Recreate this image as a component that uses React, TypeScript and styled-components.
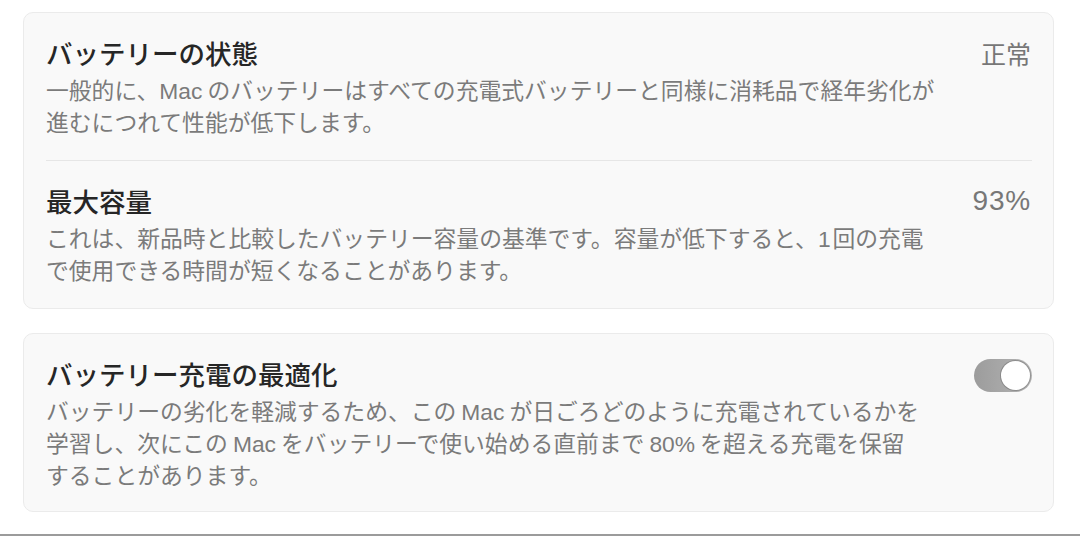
import { Fragment } from "react";
import styled, { createGlobalStyle } from "styled-components";

const GlobalStyle = createGlobalStyle`
  html, body {
    margin: 0;
    padding: 0;
    background: #ffffff;
  }
  body {
    font-family: "Noto Sans CJK JP", "Noto Sans", sans-serif;
    -webkit-font-smoothing: antialiased;
  }
`;

interface Item {
  title: string;
  lines: string[];
  value?: string;
}

const statusItems: Item[] = [
  {
    title: "バッテリーの状態",
    lines: [
      "一般的に、Macのバッテリーはすべての充電式バッテリーと同様に消耗品で経年劣化が",
      "進むにつれて性能が低下します。",
    ],
    value: "正常",
  },
  {
    title: "最大容量",
    lines: [
      "これは、新品時と比較したバッテリー容量の基準です。容量が低下すると、1回の充電",
      "で使用できる時間が短くなることがあります。",
    ],
    value: "93%",
  },
];

const optimizeItem: Item = {
  title: "バッテリー充電の最適化",
  lines: [
    "バッテリーの劣化を軽減するため、このMacが日ごろどのように充電されているかを",
    "学習し、次にこのMacをバッテリーで使い始める直前まで80%を超える充電を保留",
    "することがあります。",
  ],
};

const LATIN = /^[A-Za-z0-9%]+$/;

// wrap latin runs so they get the wider latin face and the small gap macOS puts around them
function withLatin(text: string) {
  const parts = text.split(/([A-Za-z0-9%]+)/);
  return parts.map((part, i) => {
    if (!LATIN.test(part)) return <Fragment key={i}>{part}</Fragment>;
    const prev = parts[i - 1] ?? "";
    const afterPunct = prev === "" || /[、。]$/.test(prev);
    const digits = /^[0-9]+$/.test(part);
    return (
      <Latin key={i} left={!afterPunct} right={!digits}>
        {part}
      </Latin>
    );
  });
}

function Lines({ lines }: { lines: string[] }) {
  return (
    <Description>
      {lines.map((l) => (
        <Line key={l}>{withLatin(l)}</Line>
      ))}
    </Description>
  );
}

export default function App() {
  return (
    <Page>
      <GlobalStyle />
      <Content>
        <Card>
          {statusItems.map((item, i) => (
            <Row key={item.title} divided={i > 0} bottom={22}>
              <Text>
                <Title>{item.title}</Title>
                <Lines lines={item.lines} />
              </Text>
              <Value latin={/^[0-9%]+$/.test(item.value ?? "")}>
                {item.value}
              </Value>
            </Row>
          ))}
        </Card>

        <Card>
          <Row divided={false} bottom={20}>
            <Text>
              <Title>{optimizeItem.title}</Title>
              <Lines lines={optimizeItem.lines} />
            </Text>
            <Toggle on={true} aria-label={optimizeItem.title}>
              <Knob />
            </Toggle>
          </Row>
        </Card>
      </Content>
      <BottomRule />
    </Page>
  );
}

const Page = styled.div`
  width: 1080px;
  height: 537px;
  display: flex;
  flex-direction: column;
  justify-content: space-between;
  overflow: hidden;
`;

const Content = styled.div`
  display: flex;
  flex-direction: column;
  gap: 24px;
  padding: 12px 26px 0 23px;
`;

const Card = styled.section`
  background: #f9f9f9;
  border: 1px solid #ebebeb;
  border-radius: 10px;
  padding: 0 21px 0 22px;
`;

const Row = styled.div<{ divided: boolean; bottom: number }>`
  display: flex;
  justify-content: space-between;
  align-items: flex-start;
  padding: 23px 0 ${(p) => p.bottom}px;
  border-top: ${(p) => (p.divided ? "1px solid #e6e6e6" : "none")};
`;

const Text = styled.div`
  display: flex;
  flex-direction: column;
  gap: 4px;
`;

const Title = styled.div`
  font-size: 26.5px;
  line-height: 34px;
  font-weight: 500;
  color: #262626;
`;

const Description = styled.div`
  display: flex;
  flex-direction: column;
  font-size: 22.8px;
  line-height: 32px;
  color: #7b7b7b;
  white-space: nowrap;
`;

const Line = styled.span`
  display: block;
  height: 32px;
`;

const Latin = styled.span<{ left: boolean; right: boolean }>`
  font-family: "Liberation Sans", "Noto Sans", sans-serif;
  line-height: 1;
  margin-left: ${(p) => (p.left ? "0.22em" : "0")};
  margin-right: ${(p) => (p.right ? "0.22em" : "0.08em")};
`;

const Value = styled.div<{ latin: boolean }>`
  font-family: ${(p) =>
    p.latin
      ? `"Liberation Sans", "Noto Sans", sans-serif`
      : `"Noto Sans CJK JP", sans-serif`};
  font-size: ${(p) => (p.latin ? "28px" : "25px")};
  letter-spacing: ${(p) => (p.latin ? "0.8px" : "0")};
  line-height: 34px;
  color: #777777;
  padding-right: 1px;
`;

const Toggle = styled.div<{ on: boolean }>`
  flex: none;
  width: 58px;
  height: 33px;
  margin-top: 2px;
  border-radius: 17px;
  background: ${(p) =>
    p.on ? "linear-gradient(90deg, #9c9c9c, #b4b4b4)" : "#e2e2e2"};
  display: flex;
  align-items: center;
  justify-content: ${(p) => (p.on ? "flex-end" : "flex-start")};
  padding: 0 2px;
  box-sizing: border-box;
`;

const Knob = styled.div`
  width: 29px;
  height: 29px;
  border-radius: 50%;
  background: #ffffff;
  box-shadow: 0 0 0 1px rgba(0, 0, 0, 0.18);
`;

const BottomRule = styled.div`
  height: 2px;
  margin-bottom: 1px;
  background: #9b9b9b;
`;
